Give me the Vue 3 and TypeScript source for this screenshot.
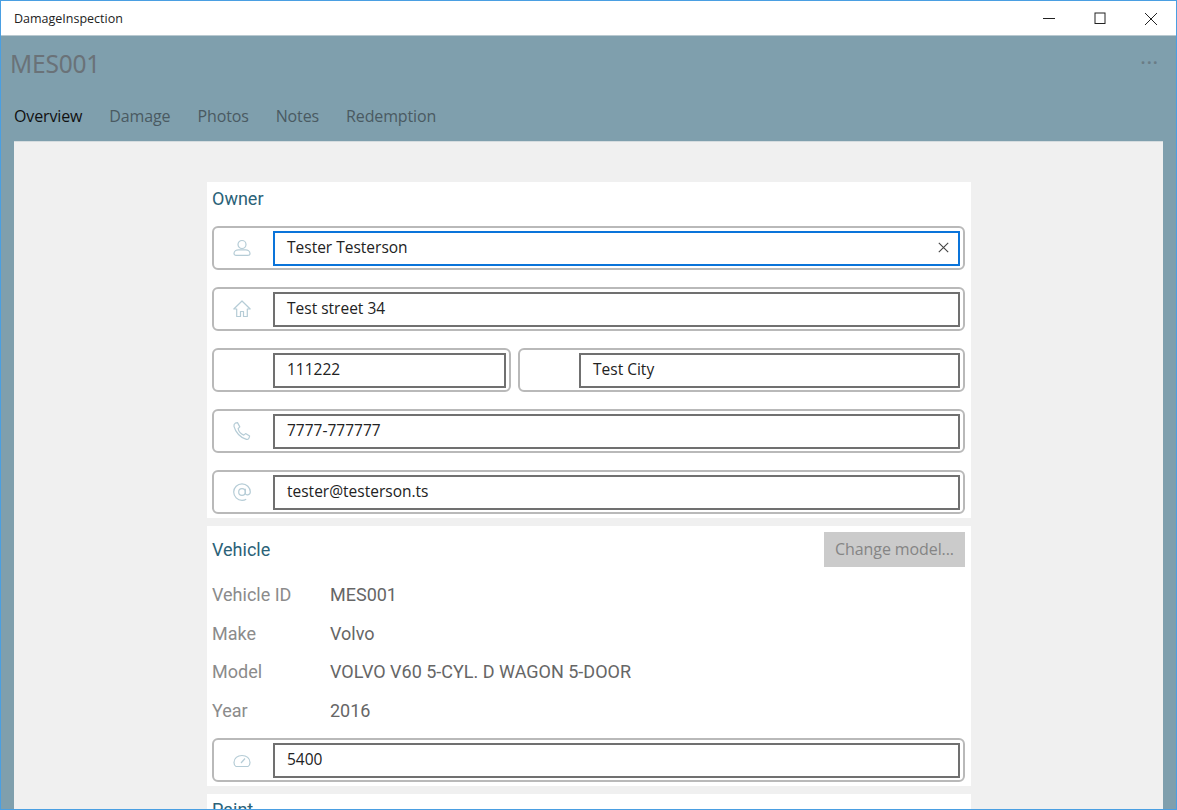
<script setup lang="ts">
const tabs: string[] = ['Overview', 'Damage', 'Photos', 'Notes', 'Redemption']
const facts: [string, string][] = [
  ['Vehicle ID', 'MES001'],
  ['Make', 'Volvo'],
  ['Model', 'VOLVO V60 5-CYL. D WAGON 5-DOOR'],
  ['Year', '2016'],
]
</script>

<template>
  <div class="window">
    <header class="titlebar">
      <span class="app-name">DamageInspection</span>
      <div class="controls">
        <svg width="50" height="35" viewBox="0 0 50 35"><path d="M17 17.500h12" stroke="#222" stroke-width="1" fill="none" /></svg>
        <svg width="50" height="35" viewBox="0 0 50 35"><rect x="19" y="12" width="10" height="10.500" stroke="#222" stroke-width="1" fill="none" /></svg>
        <svg width="50" height="35" viewBox="0 0 50 35"><path d="M19 12l12 12M31 12L19 24" stroke="#222" stroke-width="1" fill="none" /></svg>
      </div>
    </header>
    <div class="shell">
      <div class="heading">
        <h1>MES001</h1>
        <span class="more">···</span>
      </div>
      <nav class="tabs">
        <span v-for="(t, i) in tabs" :key="t" class="tab" :class="{ active: i === 0 }">{{ t }}</span>
      </nav>
      <main class="panel">
        <div class="column">
          <section class="card owner">
            <h2>Owner</h2>
            <div class="row">
              <div class="icon">
                <svg width="20" height="20" viewBox="0 0 20 20" fill="none" stroke="#b5ccd6" stroke-width="1.200"><circle cx="10" cy="6.500" r="4" /><path d="M2 15.500c0-2.500 2.500-3.700 4.300-3.700h7.400c1.800 0 4.300 1.200 4.300 3.700 0 1.300-1 1.800-2 1.800H4c-1 0-2-.5-2-1.800z" /></svg>
              </div>
              <div class="field focused"><span>Tester Testerson</span>
                <svg class="clear" width="11" height="11" viewBox="0 0 11 11"><path d="M.8.8l9.400 9.400M10.200.8L.8 10.200" stroke="#444" stroke-width="1.100" fill="none" /></svg>
              </div>
            </div>
            <div class="row">
              <div class="icon">
                <svg width="20" height="20" viewBox="0 0 20 20" fill="none" stroke="#b5ccd6" stroke-width="1.200"><path d="M10 2L1.800 10h2.900v7.500h3.800v-5h3v5h3.800V10h2.900z" stroke-linejoin="round" /></svg>
              </div>
              <div class="field"><span>Test street 34</span></div>
            </div>
            <div class="split">
              <div class="row small">
                <div class="icon"></div>
                <div class="field"><span>111222</span></div>
              </div>
              <div class="row">
                <div class="icon"></div>
                <div class="field"><span>Test City</span></div>
              </div>
            </div>
            <div class="row">
              <div class="icon">
                <svg width="20" height="20" viewBox="0 0 20 20" fill="none" stroke="#b5ccd6" stroke-width="1.200"><path d="M3.200 2.200l2.300-.6 2.300 4.300-1.700 1.700c.6 2.600 3.300 5.600 5.700 6.500l1.800-1.500 4 2.500-.6 2c-.4 1-1.500 1.500-2.600 1.200C8.400 16.800 3.500 11.300 2 5.300c-.2-1.300.2-2.600 1.200-3.100z" stroke-linejoin="round" /></svg>
              </div>
              <div class="field"><span>7777-777777</span></div>
            </div>
            <div class="row">
              <div class="icon">
                <svg width="20" height="20" viewBox="0 0 20 20" fill="none" stroke="#b5ccd6" stroke-width="1.200"><circle cx="10" cy="10" r="3.300" /><path d="M13.300 6.800v4.400c0 2.600 5 2.200 5-1.200 0-4.500-3.800-8.200-8.300-8.200S1.700 5.500 1.700 10s3.800 8.300 8.300 8.300c1.500 0 3-.4 4.200-1.100" /></svg>
              </div>
              <div class="field"><span>tester@testerson.ts</span></div>
            </div>
          </section>
          <section class="card vehicle">
            <div class="vehicle-head">
              <h2>Vehicle</h2>
              <div class="button">Change model...</div>
            </div>
            <dl class="facts">
              <div v-for="f in facts" :key="f[0]" class="fact">
                <dt>{{ f[0] }}</dt>
                <dd>{{ f[1] }}</dd>
              </div>
            </dl>
            <div class="row">
              <div class="icon">
                <svg width="20" height="20" viewBox="0 0 20 20" fill="none" stroke="#b5ccd6" stroke-width="1.200"><path d="M4 16.500c-1.400-.6-2-2-2-4 0-4.300 3.500-7 8-7s8 2.700 8 7c0 2-.6 3.400-2 4z" stroke-linejoin="round" /><path d="M9 13l4-4.500" /></svg>
              </div>
              <div class="field"><span>5400</span></div>
            </div>
          </section>
          <section class="card paint">
            <h2>Paint</h2>
          </section>
        </div>
      </main>
    </div>
  </div>
</template>

<style>
html, body { margin: 0; height: 100%; overflow: hidden; }
</style>

<style scoped>
.window {
  width: 1177px;
  height: 810px;
  box-sizing: border-box;
  border: 1px solid #4a9fe2;
  display: flex;
  flex-direction: column;
  overflow: hidden;
  font-family: "Open Sans", "Noto Sans", sans-serif;
  background: #7f9fad;
}
.titlebar {
  height: 34px;
  flex: none;
  background: #fff;
  display: flex;
  align-items: center;
  justify-content: space-between;
  border-bottom: 1px solid #b9c9d0;
}
.app-name { font-size: 12.500px; margin-left: 13px; color: #222; }
.controls { display: flex; }
.controls svg { display: block; }
.shell { flex: 1; min-height: 0; display: flex; flex-direction: column; padding: 0 13px; }
.heading {
  height: 55px;
  flex: none;
  box-sizing: border-box;
  padding-bottom: 1px;
  display: flex;
  justify-content: space-between;
  align-items: center;
}
h1 {
  margin: 0 0 0 -4px;
  font-size: 24.500px;
  font-weight: 400;
  color: #6a7278;
  font-family: "Noto Sans", sans-serif;
  letter-spacing: -0.2px;
}
.more { font-size: 16px; color: #6a7c86; letter-spacing: 1.500px; margin: 0 4px 3px 0; font-weight: 700; }
.tabs { height: 50px; flex: none; box-sizing: border-box; padding-bottom: 1px; display: flex; gap: 27px; align-items: center; }
.tab { font-size: 16px; color: #4a5a62; letter-spacing: -0.13px; }
.tab.active { color: #111; }
.panel { flex: 1; min-height: 0; background: #f0f0f0; padding-top: 40px; overflow: hidden; border-top: 1px solid #d5dcdf; box-sizing: border-box; }
.column { width: 764px; margin-left: 193px; display: flex; flex-direction: column; gap: 8px; }
.card { background: #fff; padding: 0 6px 0 5px; box-sizing: border-box; display: flex; flex-direction: column; }
.owner { height: 336px; gap: 17px; }
.owner h2 { height: 26px; margin-top: 1px; margin-bottom: 0; line-height: 32px; }
h2 { margin: 0; font-size: 18px; font-weight: 400; color: #2b6278; font-family: Roboto, sans-serif; }
.row {
  flex: 1;
  height: 44px;
  box-sizing: border-box;
  border: 2px solid #b9b9b9;
  border-radius: 6px;
  padding: 3px 3px 2px 0;
  display: flex;
  background: #fff;
  min-width: 0;
}
.owner > .row, .vehicle > .row { flex: none; }
.split { display: flex; gap: 7px; height: 44px; flex: none; }
.row.small { flex: none; width: 299px; }
.icon { width: 59px; flex: none; box-sizing: border-box; padding: 0 4px 1px 0; display: flex; align-items: center; justify-content: center; }
.field {
  flex: 1;
  box-sizing: border-box;
  border: 2px solid #707070;
  padding: 0 0 3px 12px;
  display: flex;
  align-items: center;
  justify-content: space-between;
  font-size: 15.500px;
  color: #222;
  min-width: 0;
  height: 35px;
}
.field.focused { border-color: #0a74da; }
.clear { margin-right: 9px; }
.vehicle { height: 260px; }
.vehicle-head { display: flex; justify-content: space-between; align-items: center; height: 46px; flex: none; }
.button {
  width: 141px;
  height: 35px;
  box-sizing: border-box;
  padding-bottom: 2px;
  background: #cbcbcb;
  color: #858585;
  font-size: 16px;
  display: flex;
  align-items: center;
  justify-content: center;
  margin-top: 1px;
  letter-spacing: -0.1px;
}
.facts { margin: 3px 0 0; display: flex; flex-direction: column; height: 163px; flex: none; }
.fact { display: flex; height: 38.800px; align-items: center; font-size: 18px; font-family: Roboto, sans-serif; }
dt { width: 118px; color: #8b8b8b; }
dd { margin: 0; color: #666; }
.paint { height: 40px; padding-top: 5px; }
</style>
